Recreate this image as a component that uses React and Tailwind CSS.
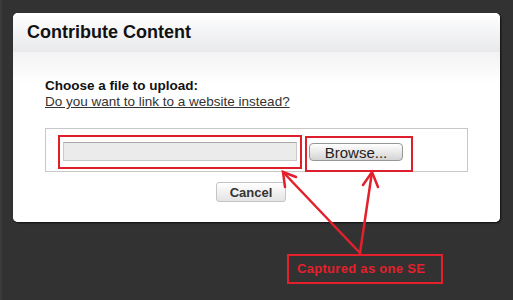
import React from "react";

const RED = "#e3202b";

function Arrows() {
    // annotation arrows drawn over the page
    return (
        <svg className="absolute inset-0 pointer-events-none" width="513" height="300" viewBox="0 0 513 300">
            <g stroke={RED} strokeWidth="2.5" strokeLinecap="round" fill="none">
                <line x1="358" y1="253" x2="281" y2="172" />
                <polyline points="283,187 281,172 294,177" />
                <line x1="358" y1="253" x2="370" y2="172" />
                <polyline points="361,185 370,172 376,187" />
            </g>
        </svg>
    );
}

function App() {
    return (
        <div className="relative w-[513px] h-[300px] overflow-hidden bg-[#323232] border-l-2 border-[#3b3b3b] pt-[13px] pl-[11px] font-['Liberation_Sans',Arial,sans-serif]">
            {/* Dialog */}
            <div className="w-[487px] h-[209px] bg-white rounded-[5px] flex flex-col shadow-[1px_1px_2px_rgba(0,0,0,0.7)]">
                {/* Header */}
                <div className="h-[40px] rounded-t-[5px] bg-linear-to-b from-white to-[#e8e9eb] border-b border-[#f4f4f4] flex items-center pl-[14px]">
                    <h1 className="text-[18px] font-bold text-[#111]">Contribute Content</h1>
                </div>

                {/* Body */}
                <div className="flex-1 rounded-b-[5px] bg-[linear-gradient(#f3f3f3,#ffffff_30px)] pl-[32px] pt-[25px]">
                    <p className="text-[13.5px] leading-[16px] font-bold text-[#111]">Choose a file to upload:</p>
                    <a className="block text-[13.5px] leading-[16px] text-[#333] underline cursor-pointer">
                        Do you want to link to a website instead?
                    </a>

                    <div className="mt-[18px] w-[423px] h-[44px] border border-[#c8c8c8] flex items-start pl-[12px] pt-[6px]">
                        <div className="w-[244px] h-[34px] border-2 border-[#dd1f2b] pl-[3px] pt-[5px]">
                            <div className="w-[234px] h-[19px] bg-[#ebebeb] border border-[#c9c9c9] border-t-[#a9a9a9]"></div>
                        </div>
                        <div className="ml-[3px] mt-[1px] w-[108px] h-[36px] border-2 border-[#dd1f2b] pl-[2px] pt-[5px]">
                            <button className="w-[94px] h-[18px] rounded-[4px] border border-[#979797] bg-linear-to-b from-white to-[#d4d4d4] text-[15px] leading-none text-[#222] flex items-center justify-center">
                                Browse...
                            </button>
                        </div>
                    </div>

                    <button className="mt-[10px] ml-[171px] w-[70px] h-[20px] rounded-[3px] border border-[#c4c4c4] bg-linear-to-b from-white to-[#e4e4e4] text-[13px] font-bold text-[#333] leading-none flex items-center justify-center">
                        Cancel
                    </button>
                </div>
            </div>

            {/* Annotation */}
            <div className="mt-[32px] ml-[274px] w-[156px] h-[30px] border-2 border-[#e3202b] flex items-center pl-[8px]">
                <span className="text-[13px] font-bold text-[#e3202b] tracking-[0.3px]">Captured as one SE</span>
            </div>

            <Arrows />
        </div>
    );
}

export default App;
